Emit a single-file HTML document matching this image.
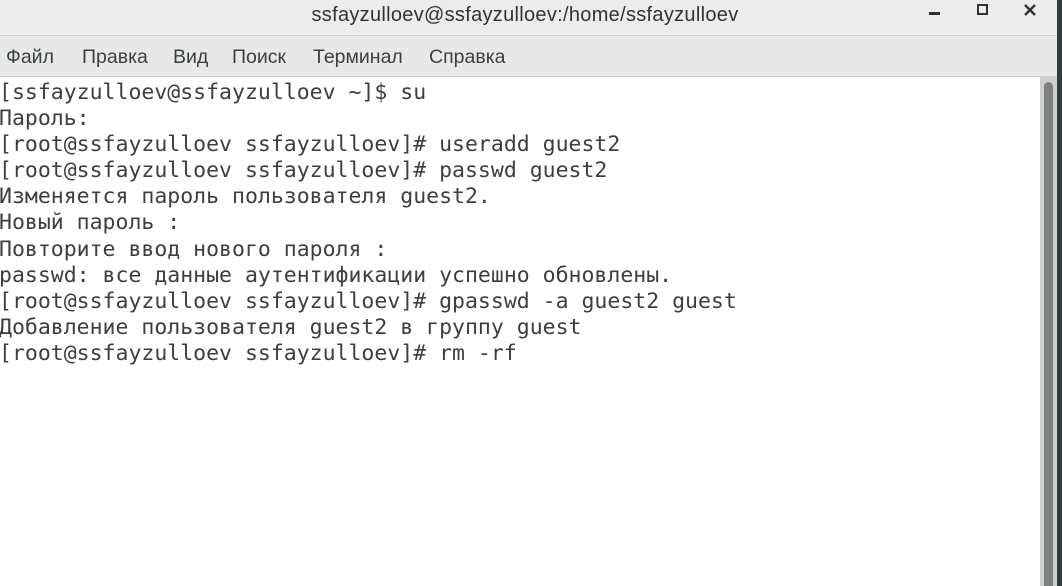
<!DOCTYPE html>
<html><head><meta charset="utf-8"><style>
html,body{margin:0;padding:0;width:1062px;height:586px;overflow:hidden;background:#fff}
.title{position:absolute;left:0;top:0;width:1057px;height:35px;background:#ececec;border-bottom:1px solid #d0d0d0;font-family:"Liberation Sans",sans-serif;font-size:20px;color:#2e3436;}
.title .t{position:absolute;left:0;width:1050px;text-align:center;top:4px;letter-spacing:0.3px}
.menu{position:absolute;left:0;top:36px;width:1057px;height:40px;background:#e8e8e8;border-bottom:1px solid #cfcfcf;font-family:"Liberation Sans","DejaVu Sans",sans-serif;font-size:19.5px;color:#3a3f41}
.menu span{position:absolute;top:10px}
.term{position:absolute;left:-1px;top:80px;font-family:"DejaVu Sans Mono","Liberation Mono",monospace;font-size:21.5px;line-height:26.1px;color:#3b3f40;white-space:pre;margin:0}
.trough{position:absolute;left:1040px;top:77px;width:17px;height:509px;background:#cfcfcf}
.thumb{position:absolute;left:1044px;top:82px;width:9px;height:504px;background:#7d8080;border-radius:5px 5px 0 0}
.edge{position:absolute;left:1057px;top:0;width:5px;height:586px;background:#2f3b45}
</style></head><body>
<div class="title"><div class="t">ssfayzulloev@ssfayzulloev:/home/ssfayzulloev</div>
<div style="position:absolute;left:929px;top:12px;width:11px;height:3px;background:#2e3436"></div>
<div style="position:absolute;left:977px;top:4px;width:7px;height:7px;border:2px solid #2e3436"></div>
<svg style="position:absolute;left:1023px;top:3px" width="14" height="14"><path d="M2 2L12 12M12 2L2 12" stroke="#2e3436" stroke-width="2.4"/></svg>
</div>
<div class="menu">
<span style="left:6px">Файл</span><span style="left:82px">Правка</span><span style="left:173px">Вид</span><span style="left:232px">Поиск</span><span style="left:313px">Терминал</span><span style="left:429px">Справка</span>
</div>
<pre class="term">[ssfayzulloev@ssfayzulloev ~]$ su
Пароль:
[root@ssfayzulloev ssfayzulloev]# useradd guest2
[root@ssfayzulloev ssfayzulloev]# passwd guest2
Изменяется пароль пользователя guest2.
Новый пароль :
Повторите ввод нового пароля :
passwd: все данные аутентификации успешно обновлены.
[root@ssfayzulloev ssfayzulloev]# gpasswd -a guest2 guest
Добавление пользователя guest2 в группу guest
[root@ssfayzulloev ssfayzulloev]# rm -rf</pre>
<div class="trough"></div><div class="thumb"></div><div class="edge"></div>
</body></html>
